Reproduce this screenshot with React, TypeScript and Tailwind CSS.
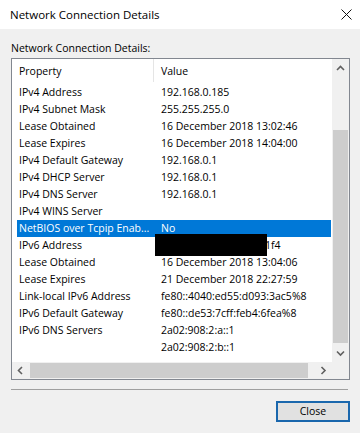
type Row = { prop: string; value: string; selected?: boolean; redacted?: boolean };

const rows: Row[] = [
  { prop: 'IPv4 Address', value: '192.168.0.185' },
  { prop: 'IPv4 Subnet Mask', value: '255.255.255.0' },
  { prop: 'Lease Obtained', value: '16 December 2018 13:02:46' },
  { prop: 'Lease Expires', value: '16 December 2018 14:04:00' },
  { prop: 'IPv4 Default Gateway', value: '192.168.0.1' },
  { prop: 'IPv4 DHCP Server', value: '192.168.0.1' },
  { prop: 'IPv4 DNS Server', value: '192.168.0.1' },
  { prop: 'IPv4 WINS Server', value: '' },
  { prop: 'NetBIOS over Tcpip Enab...', value: 'No', selected: true },
  { prop: 'IPv6 Address', value: '1f4', redacted: true },
  { prop: 'Lease Obtained', value: '16 December 2018 13:04:06' },
  { prop: 'Lease Expires', value: '21 December 2018 22:27:59' },
  { prop: 'Link-local IPv6 Address', value: 'fe80::4040:ed55:d093:3ac5%8' },
  { prop: 'IPv6 Default Gateway', value: 'fe80::de53:7cff:feb4:6fea%8' },
  { prop: 'IPv6 DNS Servers', value: '2a02:908:2:a::1' },
  { prop: '', value: '2a02:908:2:b::1' },
];

function Chevron({ dir }: { dir: 'up' | 'down' | 'left' | 'right' }) {
  const points = {
    up: '1,5 4.5,1.5 8,5',
    down: '1,1.5 4.5,5 8,1.5',
    left: '5,1 1.5,4.5 5,8',
    right: '1.5,1 5,4.5 1.5,8',
  }[dir];
  const vertical = dir === 'up' || dir === 'down';
  return (
    <svg width={vertical ? 9 : 7} height={vertical ? 7 : 9} viewBox={vertical ? '0 0 9 7' : '0 0 7 9'}>
      <polyline points={points} fill="none" stroke="#606060" strokeWidth="1.6" />
    </svg>
  );
}

export default function App() {
  return (
    <div className="flex h-[433px] w-[360px] flex-col overflow-hidden bg-[#f0f0f0] font-['Open_Sans',sans-serif] text-[10.5px] text-black">
      {/* title bar */}
      <div className="flex h-[29px] items-center justify-between bg-white pl-[10px] pr-[8px]">
        <span className="text-[11.5px]">Network Connection Details</span>
        <svg width="11" height="11" viewBox="0 0 11 11">
          <path d="M0.5 0.5L10.5 10.5M10.5 0.5L0.5 10.5" stroke="#111" strokeWidth="1" />
        </svg>
      </div>

      <div className="ml-[11px] mt-[11px] h-[16px] leading-[16px]">Network Connection Details:</div>

      {/* list view */}
      <div className="ml-[11px] mt-[2px] flex h-[322px] w-[339px] flex-col border border-[#828790] bg-white">
        <div className="flex h-[303px]">
          <div className="flex w-[320px] flex-col overflow-hidden">
            <div className="flex h-[25px] items-center">
              <div className="w-[141px] pl-[7px]">Property</div>
              <div className="h-[23px] w-px self-start bg-[#e5e5e5]" />
              <div className="pl-[7px]">Value</div>
            </div>
            {rows.map((r, i) => (
              <div
                key={i}
                className={`relative ml-[5px] flex h-[17px] w-[314px] shrink-0 items-center whitespace-nowrap leading-[17px] ${
                  r.selected ? 'bg-[#0078d7] text-white' : ''
                }`}
              >
                <div className="w-[144px] overflow-hidden pl-[2px]">{r.prop}</div>
                <div className={`flex-1 overflow-hidden ${r.redacted ? 'pl-[104px]' : ''}`}>{r.value}</div>
                {r.redacted && <div className="absolute left-[138px] top-[-3px] h-[22px] w-[112px] bg-black" />}
              </div>
            ))}
          </div>
          {/* vertical scrollbar */}
          <div className="flex w-[17px] flex-col bg-[#f0f0f0]">
            <div className="flex h-[17px] items-center justify-center pt-[2px]">
              <Chevron dir="up" />
            </div>
            <div className="mx-px mt-[54px] h-[213px] bg-[#cdcdcd]" />
            <div className="flex-1" />
            <div className="flex h-[17px] items-center justify-center">
              <Chevron dir="down" />
            </div>
          </div>
        </div>
        {/* horizontal scrollbar */}
        <div className="flex h-[17px] bg-[#f0f0f0]">
          <div className="flex w-[17px] items-center justify-center">
            <Chevron dir="left" />
          </div>
          <div className="my-px ml-px w-[278px] bg-[#cdcdcd]" />
          <div className="flex-1" />
          <div className="flex w-[17px] items-center justify-center">
            <Chevron dir="right" />
          </div>
          <div className="w-[17px]" />
        </div>
      </div>

      <div className="ml-[11px] mt-[9px] h-px w-[337px] bg-[#a0a0a0]" />

      <div className="mt-[11px] flex justify-end pr-[10px]">
        <button className="h-[21px] w-[74px] border-2 border-[#1a67ad] bg-[#e1e1e1] text-[10.5px] leading-[17px]">
          Close
        </button>
      </div>
    </div>
  );
}
